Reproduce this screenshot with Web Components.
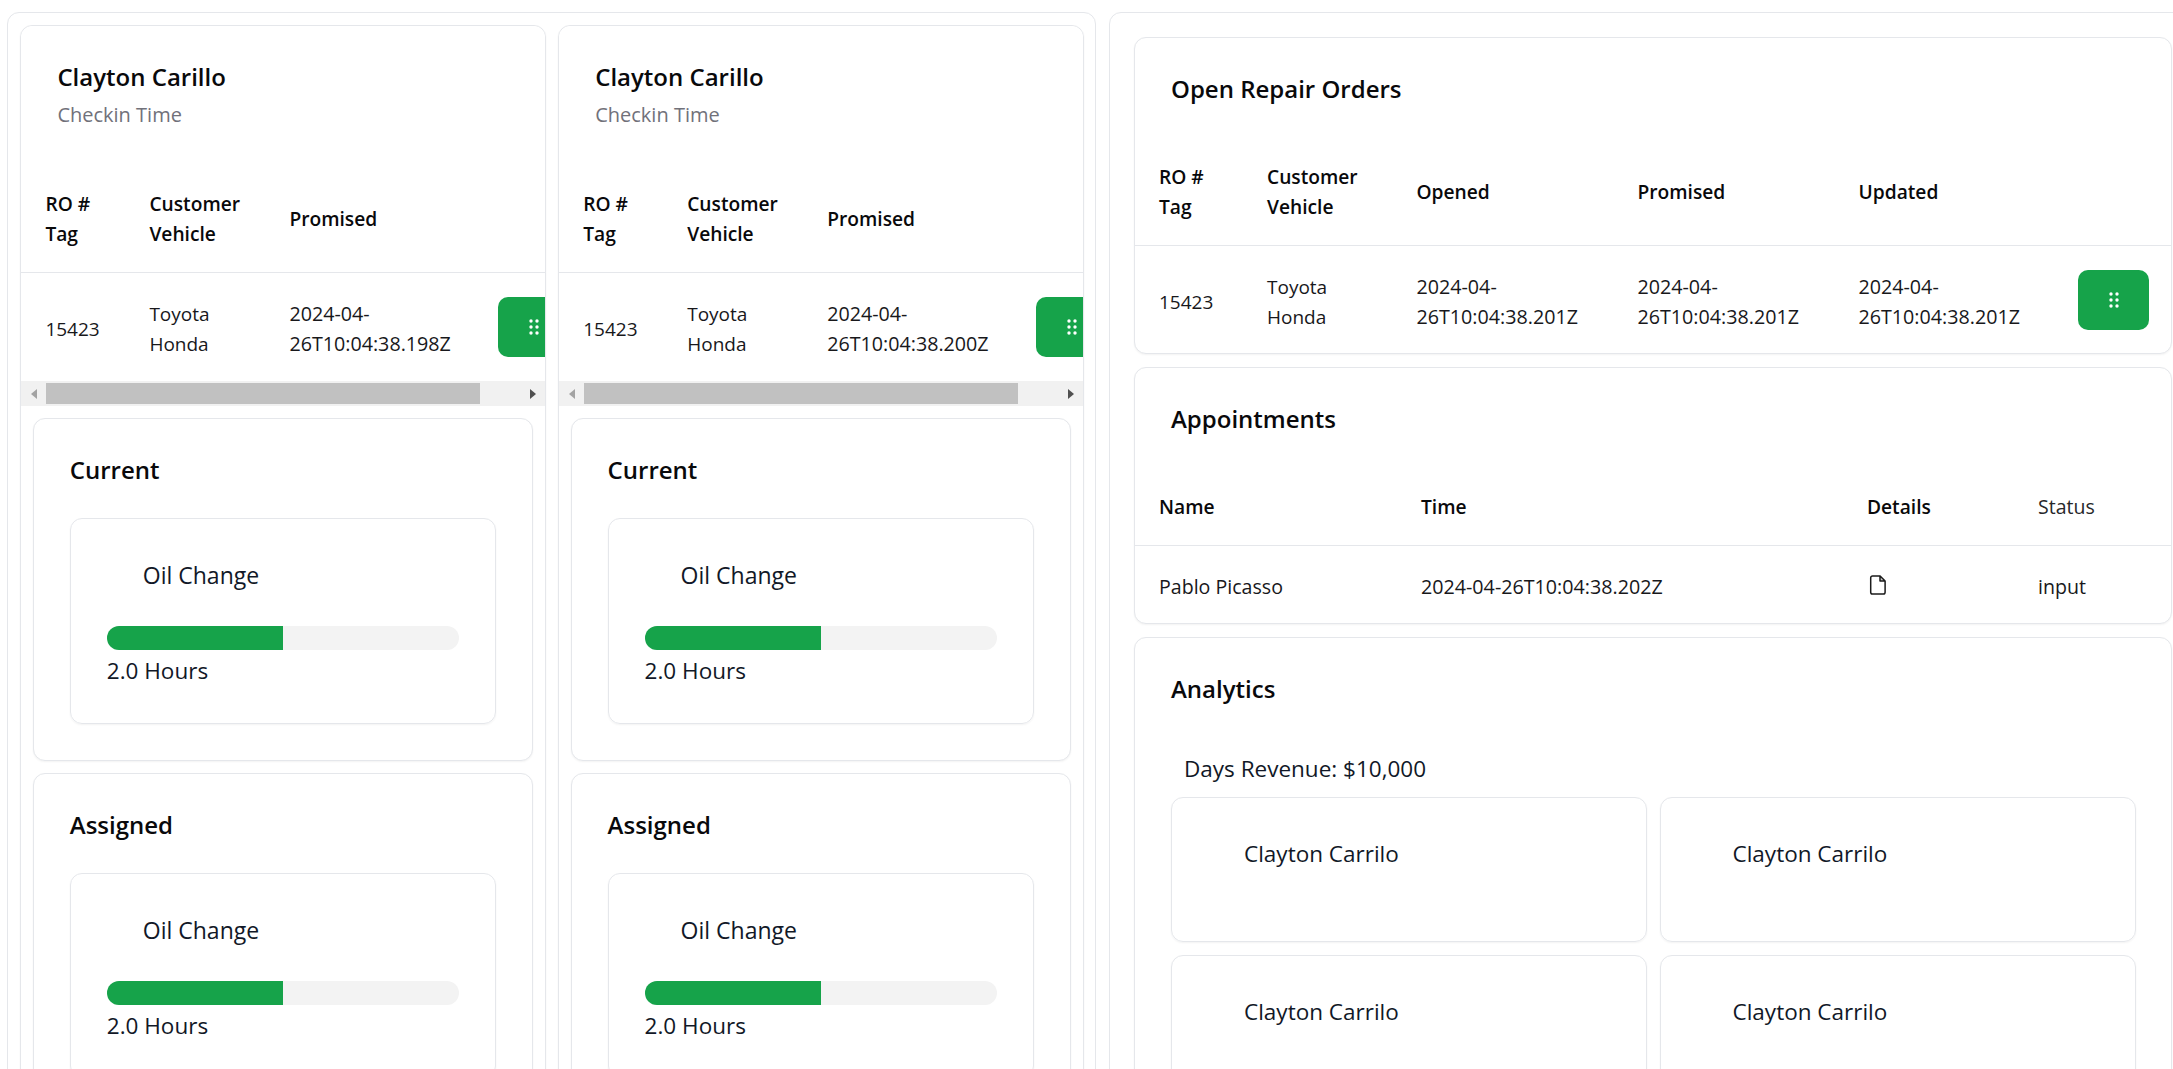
<!DOCTYPE html>
<html>
<head>
<meta charset="utf-8">
<title>Service board</title>
<style>
  html, body { margin: 0; height: 1069px; overflow: hidden; background: #fff; }
  body { font-family: "Open Sans", "Noto Sans", sans-serif; color: #111827; }
  shop-board { width: 2173px; height: 1069px; }
</style>
</head>
<body>
<script>
const GRIP = `<svg width="10" height="16" viewBox="0 0 10 16" fill="#fff"><circle cx="2" cy="2" r="1.7"/><circle cx="8" cy="2" r="1.7"/><circle cx="2" cy="8" r="1.7"/><circle cx="8" cy="8" r="1.7"/><circle cx="2" cy="14" r="1.7"/><circle cx="8" cy="14" r="1.7"/></svg>`;
const FILE = `<svg width="18" height="20" viewBox="0 0 18 20" style="display:block"><path d="M11 1.5v4.5h4.5z" fill="#c9c9c9"/><path d="M3.5 1h7.6l5 5v11.2a1.8 1.8 0 0 1-1.8 1.8H3.5a1.8 1.8 0 0 1-1.8-1.8V2.8A1.8 1.8 0 0 1 3.5 1zM11 1v5h5" fill="none" stroke="#1b1b1b" stroke-width="1.5" stroke-linejoin="round"/></svg>`;

// Card with heading, optional subtitle and a slot for the body
class ShopCard extends HTMLElement {
  connectedCallback() {
    const root = this.attachShadow({ mode: 'open' });
    const sub = this.getAttribute('subtitle');
    root.innerHTML = `
      <style>
        :host { display: block; box-sizing: border-box; border: 1px solid #e5e7eb; border-radius: 12px; background: #fff; box-shadow: 0 1px 2px rgba(0,0,0,.05); overflow: hidden; flex: none; }
        .head { padding: 35px 36px 32px; }
        h3 { margin: 0; font-size: 24px; line-height: 32px; font-weight: 600; color: #09090b; }
        p { margin: 8px 0 3px; font-size: 20px; line-height: 28px; color: #71717a; }
      </style>
      <div class="head"><h3>${this.getAttribute('heading')}</h3>${sub ? `<p>${sub}</p>` : ''}</div>
      <slot></slot>`;
  }
}

// Table from a JSON description: col widths, header cells, one row of cells
class RoTable extends HTMLElement {
  connectedCallback() {
    const root = this.attachShadow({ mode: 'open' });
    const cols = JSON.parse(this.getAttribute('cols'));
    const head = JSON.parse(this.getAttribute('head'));
    const row = JSON.parse(this.getAttribute('row'));
    const cell = (v) => v === '@grip' ? `<button>${GRIP}</button>` : v === '@file' ? FILE : v;
    const cls = (v) => v === '@grip' ? 'action' : v === '@file' ? 'action icon-cell' : /^\d{4}-/.test(v) ? 'stamp' : '';
    const total = cols.reduce((a, b) => a + b, 0);
    root.innerHTML = `
      <style>
        :host { display: block; overflow: hidden; font-size: var(--cell-size, 19px); line-height: 30px; color: #18181b; }
        table { border-collapse: collapse; table-layout: fixed; width: ${total}px; }
        th { padding: 25px 24px 23px; text-align: left; font-weight: 600; color: #09090b; border-bottom: 1px solid #e5e7eb; font-size: 19.2px; }
        th.plain { font-weight: 400; color: #27272a; font-size: 19.5px; }
        td { padding: 26px 24px calc(21px + var(--row-extra, 0px)); }
        td.stamp { font-size: 19.7px; }
        td.action { padding-top: 24px; padding-bottom: calc(23px + var(--row-extra, 0px)); }
        td:last-child:has(button) { padding-right: 0; }
        button { display: flex; align-items: center; justify-content: center; width: 71px; height: 60px; padding: 0; border: 0; border-radius: 10px; background: #16a34a; }
        .icon-cell svg { margin-left: 2px; }
      </style>
      <table>
        <colgroup>${cols.map(c => `<col style="width:${c}px">`).join('')}</colgroup>
        <thead><tr>${head.map(h => `<th class="${h.startsWith('~') ? 'plain' : ''}">${h.replace('~', '')}</th>`).join('')}</tr></thead>
        <tbody><tr>${row.map(v => `<td class="${cls(v)}">${cell(v)}</td>`).join('')}</tr></tbody>
      </table>`;
  }
}

// Fake horizontal scrollbar under the clipped check-in table
class ScrollBar extends HTMLElement {
  constructor() {
    super();
    this.attachShadow({ mode: 'open' }).innerHTML = `
      <style>
        :host { display: flex; align-items: center; height: 25px; background: #f1f1f1; }
        i { width: 0; height: 0; border: solid transparent; border-width: 5.5px 0; flex: none; }
        .l { border-right: 6px solid #a3a3a3; margin: 0 9px 0 10px; }
        .r { border-left: 6px solid #505050; margin-left: 50px; }
        b { display: block; width: 434px; height: 21px; background: #c1c1c1; }
      </style>
      <i class="l"></i><b></b><i class="r"></i>`;
  }
}

class JobCard extends HTMLElement {
  constructor() {
    super();
    this.attachShadow({ mode: 'open' }).innerHTML = `
      <style>
        :host { display: block; box-sizing: border-box; height: 205.5px; padding: 36px 36px 0; border: 1px solid #e5e7eb; border-radius: 12px; box-shadow: 0 1px 2px rgba(0,0,0,.05); }
        .name { padding-left: 36px; font-size: 23px; line-height: 40px; color: #111827; }
        .track { height: 24px; margin-top: 31px; border-radius: 12px; background: #f3f3f3; overflow: hidden; }
        .fill { width: 50%; height: 100%; background: #16a34a; }
        .hours { margin-top: 7px; font-size: 22.5px; line-height: 28px; color: #111827; }
      </style>
      <div class="name"><slot name="name"></slot></div>
      <div class="track"><div class="fill"></div></div>
      <div class="hours"><slot name="hours"></slot></div>`;
  }
}

class TechSection extends HTMLElement {
  constructor() {
    super();
    this.attachShadow({ mode: 'open' }).innerHTML = `
      <style>
        :host { display: block; padding: 0 36px 36px; }
      </style>
      <slot></slot>`;
  }
}

class PersonCard extends HTMLElement {
  constructor() {
    super();
    this.attachShadow({ mode: 'open' }).innerHTML = `
      <style>
        :host { display: block; box-sizing: border-box; height: 145px; padding: 36px 72px 0; border: 1px solid #e5e7eb; border-radius: 12px; box-shadow: 0 1px 2px rgba(0,0,0,.05); font-size: 22.5px; line-height: 40px; color: #111827; }
      </style>
      <slot></slot>`;
  }
}

class AnalyticsBody extends HTMLElement {
  constructor() {
    super();
    this.attachShadow({ mode: 'open' }).innerHTML = `
      <style>
        :host { display: block; padding: 0 36px 36px; }
        .rev { margin: 17px 0 13px; padding-left: 13px; font-size: 22.5px; line-height: 30px; color: #111827; }
        .grid { display: grid; grid-template-columns: 476px 476px; gap: 13px 12.5px; }
      </style>
      <div class="rev"><slot name="revenue"></slot></div>
      <div class="grid"><slot></slot></div>`;
  }
}

class CheckinColumn extends HTMLElement {
  connectedCallback() {
    const stamp = this.getAttribute('stamp');
    const root = this.attachShadow({ mode: 'open' });
    root.innerHTML = `
      <style>
        :host { display: flex; flex-direction: column; width: 525.8px; flex: none; box-sizing: border-box; border: 1px solid #e5e7eb; border-radius: 12px; box-shadow: 0 1px 2px rgba(0,0,0,.05); height: 2000px; }
        shop-card.plain { border: 0; box-shadow: none; border-radius: 12px 12px 0 0; }
        .stack { display: flex; flex-direction: column; gap: 12px; padding: 12px 11px 12px 11.4px; }
        shop-card.sec { width: 500.6px; }
      </style>
      <shop-card class="plain" heading="Clayton Carillo" subtitle="Checkin Time">
        <ro-table style="--row-extra:1px" cols="[104,140,209,118]"
          head='["RO #<br>Tag","Customer<br>Vehicle","Promised",""]'
          row='["15423","Toyota<br>Honda","${stamp}","@grip"]'></ro-table>
      </shop-card>
      <scroll-bar></scroll-bar>
      <div class="stack">
        ${['Current', 'Assigned'].map(h => `
        <shop-card class="sec" heading="${h}">
          <tech-section>
            <job-card><span slot="name">Oil Change</span><span slot="hours">2.0 Hours</span></job-card>
          </tech-section>
        </shop-card>`).join('')}
      </div>`;
  }
}

class ShopBoard extends HTMLElement {
  constructor() {
    super();
    this.attachShadow({ mode: 'open' }).innerHTML = `
      <style>
        :host { display: flex; gap: 13px; box-sizing: border-box; padding: 12px 0 0 7px; overflow: hidden; }
        .panel { box-sizing: border-box; flex: none; border: 1px solid #e5e7eb; border-radius: 12px; height: 2200px; }
        .left { display: flex; gap: 12px; width: 1089px; padding: 12px 11px 12px 12.4px; }
        .right { display: flex; flex-direction: column; gap: 13px; width: 1100px; padding: 24px; align-items: flex-start; }
      </style>
      <div class="panel left"><slot name="left"></slot></div>
      <div class="panel right"><slot name="right"></slot></div>`;
  }
}

customElements.define('shop-card', ShopCard);
customElements.define('ro-table', RoTable);
customElements.define('scroll-bar', ScrollBar);
customElements.define('job-card', JobCard);
customElements.define('tech-section', TechSection);
customElements.define('person-card', PersonCard);
customElements.define('analytics-body', AnalyticsBody);
customElements.define('checkin-column', CheckinColumn);
customElements.define('shop-board', ShopBoard);

document.body.insertAdjacentHTML('beforeend', `
<shop-board>
  <checkin-column slot="left" stamp="2024-04-26T10:04:38.198Z"></checkin-column>
  <checkin-column slot="left" stamp="2024-04-26T10:04:38.200Z"></checkin-column>
  <shop-card slot="right" style="width:1038px" heading="Open Repair Orders">
    <ro-table cols="[108,149.5,221,221,219.5,119]"
      head='["RO #<br>Tag","Customer<br>Vehicle","Opened","Promised","Updated",""]'
      row='["15423","Toyota<br>Honda","2024-04-26T10:04:38.201Z","2024-04-26T10:04:38.201Z","2024-04-26T10:04:38.201Z","@grip"]'></ro-table>
  </shop-card>
  <shop-card slot="right" style="width:1038px" heading="Appointments">
    <ro-table style="--cell-size:19.6px" cols="[262,446,171,159]"
      head='["Name","Time","Details","~Status"]'
      row='["Pablo Picasso","2024-04-26T10:04:38.202Z","@file","input"]'></ro-table>
  </shop-card>
  <shop-card slot="right" style="width:1038px" heading="Analytics">
    <analytics-body>
      <span slot="revenue">Days Revenue: $10,000</span>
      <person-card>Clayton Carrilo</person-card>
      <person-card>Clayton Carrilo</person-card>
      <person-card>Clayton Carrilo</person-card>
      <person-card>Clayton Carrilo</person-card>
    </analytics-body>
  </shop-card>
</shop-board>`);
</script>
</body>
</html>
